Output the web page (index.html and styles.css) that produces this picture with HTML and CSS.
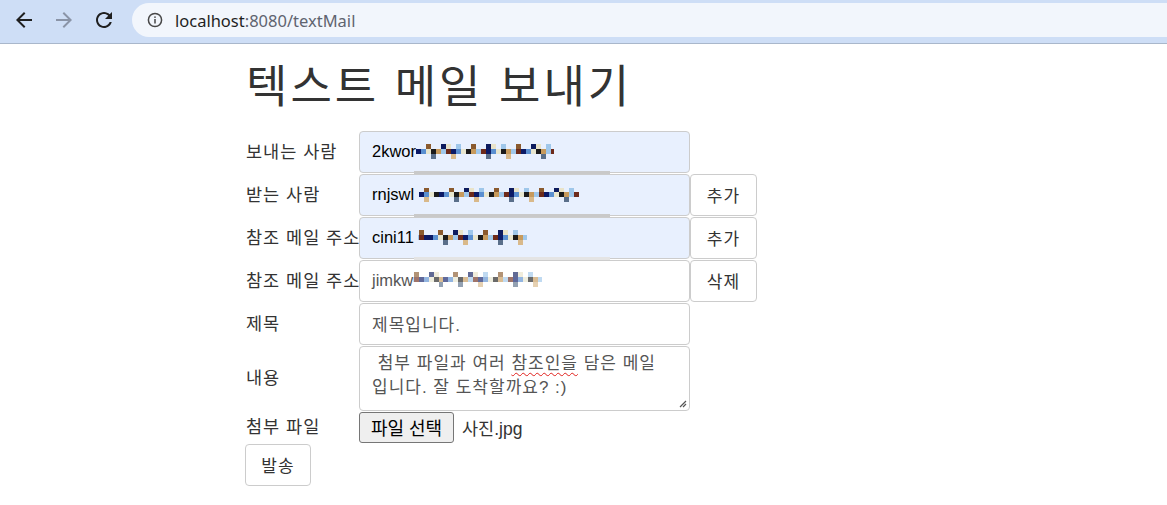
FILE: index.html
```html
<!DOCTYPE html>
<html lang="ko">
<head>
  <meta charset="UTF-8">
  <meta name="viewport" content="width=device-width, initial-scale=1.0">
  <title>텍스트 메일 보내기</title>
  <link rel="stylesheet" href="styles.css">
</head>
<body>
  <header class="toolbar">
    <div class="nav-btns">
      <svg viewBox="0 0 24 24"><path d="M20 11H7.83l5.59-5.59L12 4l-8 8 8 8 1.41-1.41L7.83 13H20v-2z"/></svg>
      <svg class="off" viewBox="0 0 24 24"><path d="M12 4l-1.41 1.41L16.17 11H4v2h12.17l-5.58 5.59L12 20l8-8z"/></svg>
      <svg viewBox="0 0 24 24"><path d="M17.65 6.35C16.2 4.9 14.21 4 12 4c-4.42 0-7.99 3.58-7.99 8s3.57 8 7.99 8c3.73 0 6.84-2.55 7.73-6h-2.08c-.82 2.33-3.04 4-5.65 4-3.31 0-6-2.69-6-6s2.69-6 6-6c1.66 0 3.14.69 4.22 1.78L13 11h7V4l-2.35 2.35z"/></svg>
    </div>
    <div class="omnibox">
      <svg class="info" viewBox="0 0 16 16">
        <circle cx="8" cy="8" r="6.6" fill="none" stroke="#474747" stroke-width="1.5"/>
        <rect x="7.25" y="7" width="1.5" height="4.5" fill="#474747"/>
        <rect x="7.25" y="4.4" width="1.5" height="1.5" fill="#474747"/>
      </svg>
      <span class="url"><span class="host">localhost</span><span class="path">:8080/textMail</span></span>
    </div>
  </header>

  <main class="page">
    <h1>텍스트 메일 보내기</h1>

    <form class="mail-form">
      <label class="lbl">보내는 사람</label>
      <div class="field filled smear">2kwor<span class="mosaic m1"><b></b><b></b><b></b></span></div>

      <label class="lbl">받는 사람</label>
      <div class="field filled smear">rnjswl&nbsp;<span class="mosaic m2"><b></b><b></b><b></b></span></div>
      <button type="button" class="btn side">추가</button>

      <label class="lbl">참조 메일 주소</label>
      <div class="field filled smear light">cini11&nbsp;<span class="mosaic m3"><b></b><b></b><b></b></span></div>
      <button type="button" class="btn side">추가</button>

      <label class="lbl">참조 메일 주소</label>
      <div class="field">jimkw<span class="mosaic m4"><b></b><b></b><b></b></span></div>
      <button type="button" class="btn side">삭제</button>

      <label class="lbl">제목</label>
      <div class="field ko">제목입니다.</div>

      <label class="lbl">내용</label>
      <div class="field ko memo"> 첨부 파일과 여러 <span class="typo">참조인을</span> 담은 메일<br>입니다. 잘 도착할까요? :)<svg class="grip" viewBox="0 0 8 8"><path d="M7 1L1 7M7 4L4 7" stroke="#555" stroke-width="1.2"/></svg></div>

      <label class="lbl">첨부 파일</label>
      <div class="file-pick">
        <button type="button" class="file-btn">파일 선택</button>
        <span class="file-name">사진.jpg</span>
      </div>

      <button type="submit" class="btn send">발송</button>
    </form>
  </main>
</body>
</html>
```

FILE: styles.css
```css
body {
  margin: 0;
  font-family: "Liberation Sans", "Noto Sans CJK KR", sans-serif;
  color: #333;
  background-color: #fff;
}

/* browser bar */
.toolbar {
  display: flex;
  align-items: flex-start;
  height: 43px;
  background-color: #cedef6;
  border-bottom: 1px solid #a9b7cb;
}

.nav-btns {
  display: flex;
  gap: 16px;
  padding: 8px 0 0 12px;
}

.nav-btns svg {
  width: 24px;
  height: 24px;
  fill: #1f1f1f;
}

.nav-btns .off {
  fill: #8a94a7;
}

.omnibox {
  flex: 1;
  display: flex;
  align-items: center;
  height: 34px;
  margin: 3px 0 0 16px;
  padding-left: 15px;
  border-radius: 17px 0 0 17px;
  background-color: #f2f6fc;
}

.omnibox .info {
  width: 16px;
  height: 16px;
}

.url {
  margin-left: 12px;
  font-family: "Noto Sans", sans-serif;
  font-size: 16.5px;
  color: #1f1f1f;
}

.url .path {
  color: #5f6470;
}

/* page */
.page {
  padding-left: 246px;
}

.page h1 {
  margin: 19px 0 18px;
  font-size: 45px;
  font-weight: normal;
  line-height: 1.1;
  letter-spacing: 3px;
}

.mail-form {
  display: grid;
  grid-template-columns: 113px 331px 67px;
  row-gap: 1px;
  align-items: center;
}

.lbl {
  grid-column: 1;
  margin-top: -3px;
  font-size: 17.5px;
  letter-spacing: 1px;
  white-space: nowrap;
}

.field {
  grid-column: 2;
  position: relative;
  display: flex;
  align-items: center;
  box-sizing: border-box;
  height: 42px;
  padding: 0 12px;
  border: 1px solid #ccc;
  border-radius: 4px;
  background-color: #fff;
  font-size: 16.5px;
  color: #555;
  white-space: pre;
}

.field.ko {
  font-size: 17px;
  letter-spacing: 1px;
}

.field.filled {
  background-color: #e8f0fe;
  color: #000;
}

.smear::after {
  content: "";
  position: absolute;
  left: 54px;
  bottom: -2px;
  width: 196px;
  height: 3px;
  background-color: #c9c9c9;
}

.smear.light::after {
  background-color: #e4e4e4;
}

.memo {
  display: block;
  height: 65px;
  padding: 5px 12px 0;
  line-height: 24px;
  white-space: pre-wrap;
}

.typo {
  text-decoration: underline wavy #e0201c;
  text-decoration-thickness: 1px;
  text-underline-offset: 3px;
}

.grip {
  position: absolute;
  right: 2px;
  bottom: 2px;
  width: 8px;
  height: 8px;
}

.btn {
  box-sizing: border-box;
  height: 42px;
  padding: 0;
  border: 1px solid #ccc;
  border-radius: 4px;
  background-color: #fff;
  color: #333;
  font-family: inherit;
  font-size: 17px;
  letter-spacing: 1px;
}

.btn.side {
  grid-column: 3;
}

.btn.send {
  grid-column: 1;
  width: 66px;
  margin-left: -1px;
}

.file-pick {
  grid-column: 2;
  display: flex;
  align-items: center;
  gap: 8px;
}

.file-btn {
  box-sizing: border-box;
  width: 95px;
  height: 31px;
  padding: 0;
  border: 1px solid #767676;
  border-radius: 3px;
  background-color: #efefef;
  color: #000;
  font-family: inherit;
  font-size: 18px;
}

.file-name {
  font-size: 17.5px;
}

/* blurred e-mail addresses */
.mosaic {
  display: inline-flex;
  flex-direction: column;
  height: 15px;
}

.mosaic b {
  display: block;
  height: 5px;
}

.mosaic b:nth-child(1) {
  background-image: repeating-linear-gradient(90deg, transparent 0 10px, #8a5a2e 10px 15px, transparent 15px 25px, #0d1b5e 25px 30px, #e9e3c9 30px 35px, transparent 35px 40px, #9fc7ea 40px 45px);
}

.mosaic b:nth-child(2) {
  background-image: repeating-linear-gradient(90deg, #0b1a66 0 5px, #5a8fd0 5px 10px, #e8e6cf 10px 15px, #1b1b1b 15px 20px, #c79a5c 20px 25px, #9fc7ea 25px 30px, #6d2a1a 30px 35px);
}

.mosaic b:nth-child(3) {
  background-image: repeating-linear-gradient(90deg, transparent 0 15px, #5a6f8a 15px 20px, transparent 20px 35px, #d9b98a 35px 40px, transparent 40px 55px);
}

.m1 {
  width: 138px;
}

.m2 {
  width: 160px;
  height: 14px;
}

.m2 b {
  background-position: 20px 0;
}

.m3 {
  width: 109px;
}

.m3 b {
  background-position: 10px 0;
}

.m4 {
  width: 129px;
  height: 17px;
  opacity: 0.65;
}

.m4 b {
  background-position: 30px 0;
}
```
